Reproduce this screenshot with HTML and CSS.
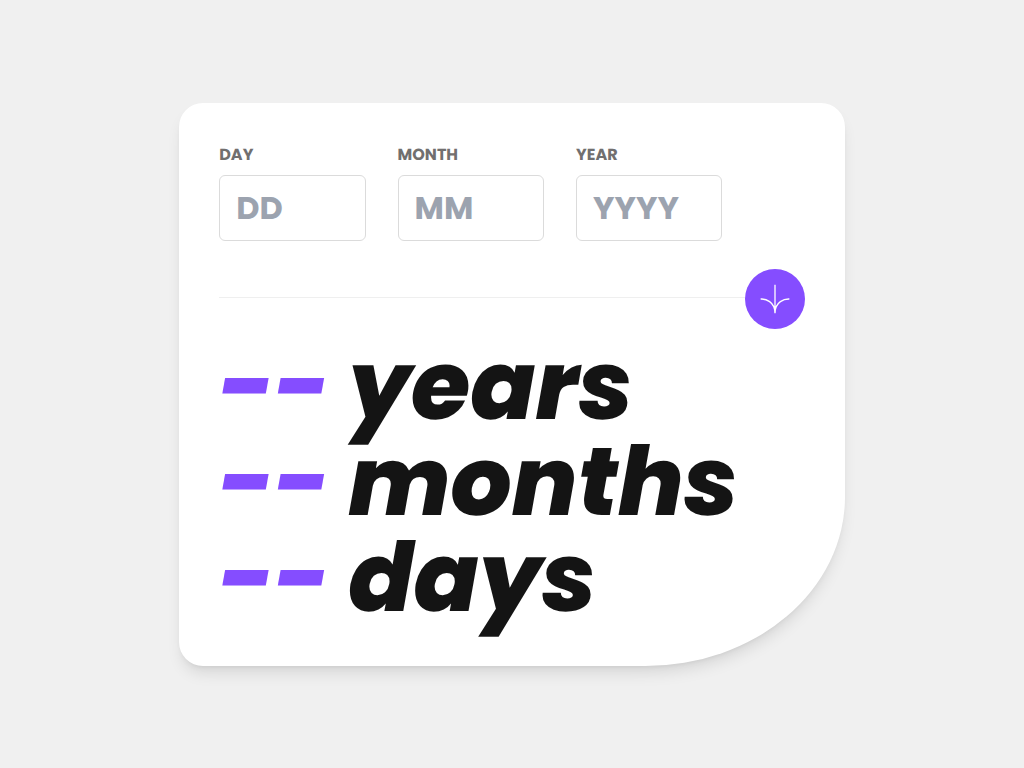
FILE: index.html
```html
<!DOCTYPE html>
<html lang="en">
<head>
<meta charset="utf-8">
<meta name="viewport" content="width=device-width, initial-scale=1">
<title>Age calculator</title>
<link rel="stylesheet" href="styles.css">
</head>
<body>
<main class="card">
  <form class="form">
    <div class="fields">
      <div class="field">
        <label class="label" for="day">DAY</label>
        <input class="input" id="day" type="text" inputmode="numeric" placeholder="DD">
      </div>
      <div class="field">
        <label class="label" for="month">MONTH</label>
        <input class="input" id="month" type="text" inputmode="numeric" placeholder="MM">
      </div>
      <div class="field">
        <label class="label" for="year">YEAR</label>
        <input class="input" id="year" type="text" inputmode="numeric" placeholder="YYYY">
      </div>
    </div>
    <div class="divider">
      <hr class="line">
      <button class="submit" type="button" aria-label="Calculate age">
        <svg class="arrow" viewBox="0 0 46 44" fill="none" stroke="#fff" stroke-width="2" aria-hidden="true"><path d="M1 22.019C8.333 21.686 23 25.616 23 44M23 44V0M45 22.019C37.667 21.686 23 25.616 23 44"/></svg>
      </button>
    </div>
  </form>
  <section class="results">
    <p class="result"><span class="value">--</span><span>years</span></p>
    <p class="result"><span class="value">--</span><span>months</span></p>
    <p class="result"><span class="value">--</span><span>days</span></p>
  </section>
</main>
</body>
</html>
```
FILE: styles.css
```css
* {
  box-sizing: border-box;
}

body {
  margin: 0;
  min-height: 100vh;
  display: flex;
  align-items: center;
  justify-content: center;
  background: #f0f0f0;
  color: #141414;
  font-family: Poppins, Inter, sans-serif;
  text-rendering: geometricPrecision;
}

.card {
  width: 65%;
  padding: 40px;
  background: #fff;
  border-radius: 24px 24px 30% 24px;
  box-shadow: 0 10px 15px -3px rgb(0 0 0 / 10%), 0 4px 6px -4px rgb(0 0 0 / 10%);
}

.fields {
  display: flex;
  gap: 32px;
}

.field {
  width: 25%;
  display: flex;
  flex-direction: column;
  gap: 8px;
}

.label {
  color: #716f6f;
  font-size: 16px;
  font-weight: 700;
  line-height: 24px;
}

.input {
  width: 100%;
  height: 66px;
  padding: 0 16px;
  border: 1px solid #dbdbdb;
  border-radius: 6px;
  background: #fff;
  color: #141414;
  font: inherit;
  font-size: 32px;
  font-weight: 700;
}

.input::placeholder {
  color: #9ca3af;
  opacity: 1;
}

.divider {
  display: flex;
  align-items: center;
  margin-top: 28px;
}

.line {
  flex: 1;
  height: 1px;
  margin: 0 0 2px;
  border: 0;
  background: #efefef;
}

.submit {
  display: grid;
  place-items: center;
  width: 60px;
  height: 60px;
  padding: 0;
  border: 0;
  border-radius: 50%;
  background: #854dff;
}

.arrow {
  width: 30px;
  height: 30px;
}

.results {
  margin-top: 9px;
}

.result {
  display: flex;
  gap: 18px;
  margin: 0;
  font-size: 96px;
  font-style: italic;
  font-weight: 800;
  line-height: 96px;
}

.value {
  color: #854dff;
}
```
